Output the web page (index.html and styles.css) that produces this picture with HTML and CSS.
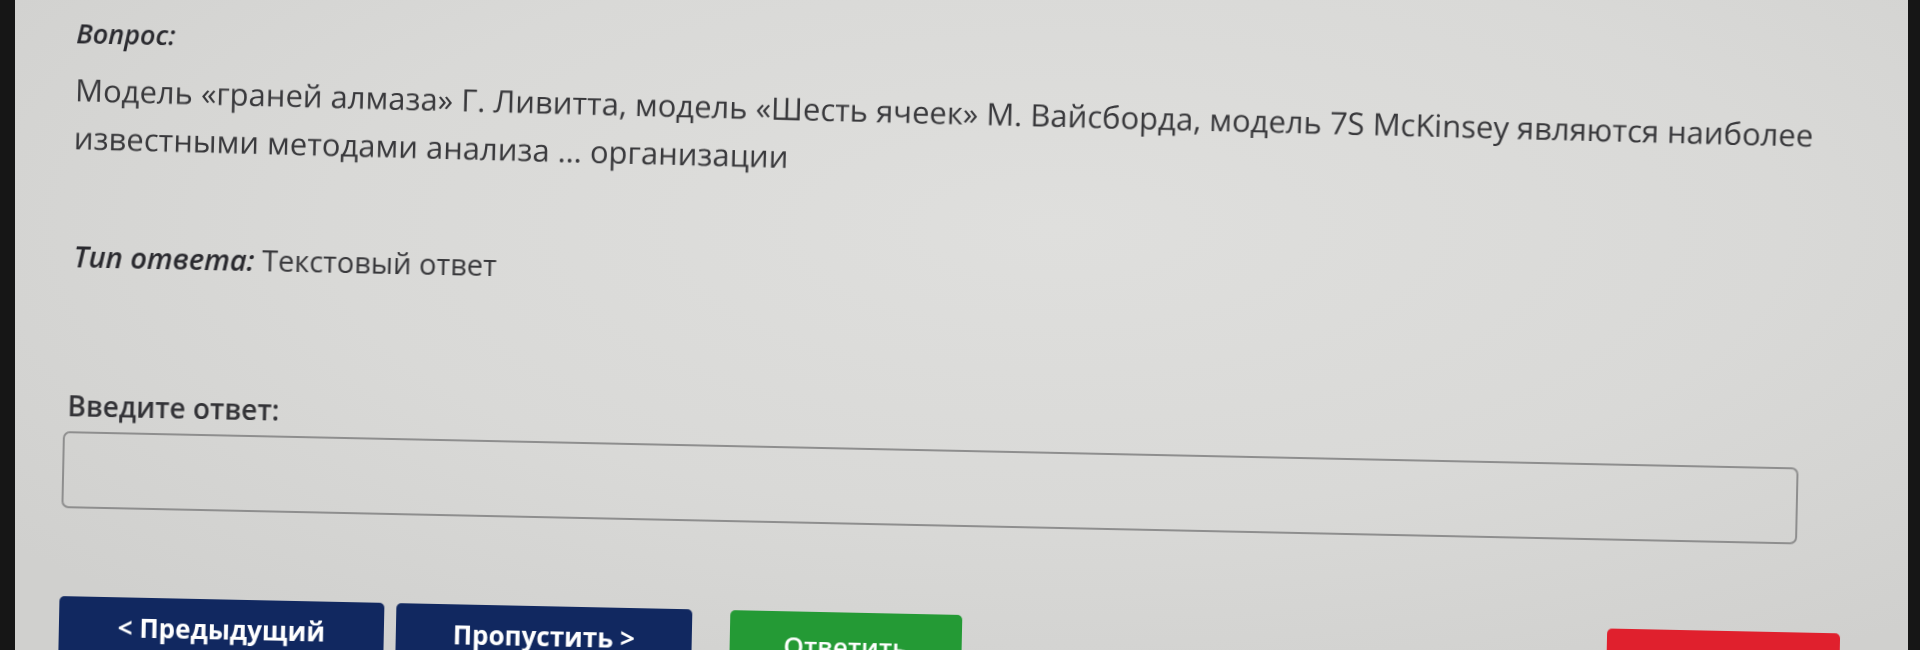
FILE: index.html
```html
<!DOCTYPE html>
<html lang="ru">
<head>
<meta charset="utf-8">
<title>Вопрос</title>
<link rel="stylesheet" href="styles.css">
</head>
<body>
<div class="screen">
  <main class="quiz">
    <div class="q-label">Вопрос:</div>
    <p class="q-text">Модель «граней алмаза» Г. Ливитта, модель «Шесть ячеек» М. Вайсборда, модель 7S McKinsey являются наиболее<br>известными методами анализа … организации</p>
    <p class="q-type"><span class="q-type-label">Тип ответа:</span> Текстовый ответ</p>
    <label class="a-label" for="answer">Введите ответ:</label>
    <input class="a-input" id="answer" type="text">
    <div class="actions">
      <button class="btn btn-prev">&lt; Предыдущий</button>
      <button class="btn btn-skip">Пропустить &gt;</button>
      <button class="btn btn-answer">Ответить</button>
      <button class="btn btn-finish">Завершить</button>
    </div>
  </main>
</div>
</body>
</html>
```
FILE: styles.css
```css
html, body {
  margin: 0;
  padding: 0;
  height: 650px;
  overflow: hidden;
  background: #161616;
}

.screen {
  margin-left: 15px;
  width: 1893px;
  height: 650px;
  overflow: hidden;
  background:
    radial-gradient(ellipse 70% 80% at 55% 35%, #dfdfdd 0%, #d9d9d7 55%, #d0d0ce 100%);
}

.quiz {
  transform: rotate(1.2deg);
  transform-origin: 0 0;
  padding: 14px 0 0 57px;
  width: 1781px;
  display: flex;
  flex-direction: column;
  align-items: flex-start;
  font-family: "Open Sans", "Liberation Sans", sans-serif;
  color: #3a3a3d;
  filter: blur(0.45px);
}

.q-label {
  margin-left: 5px;
  font-style: italic;
  font-weight: 600;
  font-size: 27px;
  line-height: 35px;
  color: #2a2a2f;
}

.q-text {
  margin: 15px 0 0 5px;
  font-size: 31px;
  line-height: 48px;
  white-space: nowrap;
  color: #38383b;
  transform: rotate(0.3deg);
  transform-origin: 0 50%;
}

.q-type {
  margin: 77px 0 0 7px;
  font-size: 29px;
  line-height: 36px;
  color: #38383b;
}

.q-type-label {
  font-style: italic;
  font-weight: 600;
  color: #2a2a2f;
}

.a-label {
  margin: 112px 0 0 4px;
  font-weight: 600;
  font-size: 28px;
  line-height: 38px;
  color: #333337;
}

.a-input {
  margin-top: 7px;
  width: 1736px;
  height: 77px;
  box-sizing: border-box;
  border: 2px solid #8e8e8e;
  border-radius: 7px;
  background: transparent;
  outline: none;
}

.actions {
  margin-top: 88px;
  display: flex;
  width: 100%;
}

.btn {
  height: 80px;
  border: 0;
  border-radius: 5px;
  padding: 12px 0 0;
  display: flex;
  justify-content: center;
  align-items: flex-start;
  color: #ffffff;
  font-family: "Open Sans", "Liberation Sans", sans-serif;
  font-weight: 700;
  font-size: 26px;
  line-height: 36px;
}

.btn-prev {
  width: 325px;
  background: #112860;
}

.btn-skip {
  width: 296px;
  margin-left: 12px;
  background: #112860;
}

.btn-answer {
  width: 232px;
  margin-left: 38px;
  background: #249a35;
  font-weight: 600;
  padding-top: 16px;
}

.btn-finish {
  width: 233px;
  margin-left: auto;
  background: #e0202d;
  padding-top: 40px;
}
```
